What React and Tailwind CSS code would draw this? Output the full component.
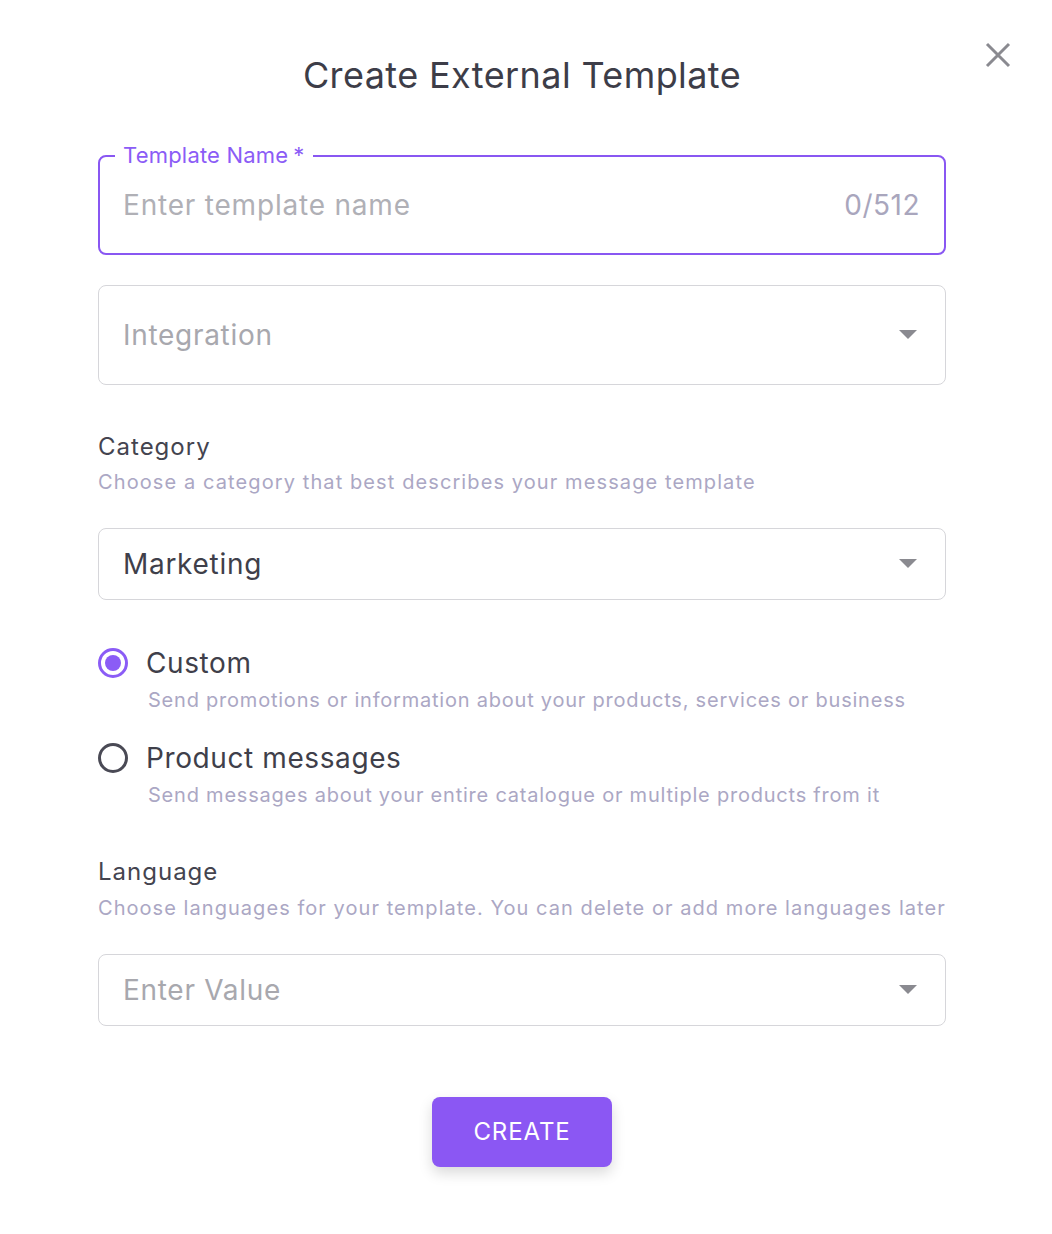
import React, { useState } from 'react';

function Caret() {
  return (
    <svg width="18" height="10" viewBox="0 0 18 10" className="shrink-0">
      <path d="M0 0 L18 0 L9 9 Z" fill="#8a8a90" />
    </svg>
  );
}

function SelectBox({ value, placeholder, tall }) {
  return (
    <div className={`flex items-center justify-between border border-[#d6d6da] rounded-lg pl-[24px] pr-[28px] ${tall ? 'h-[100px]' : 'h-[72px]'}`}>
      <span className={`text-[28px] tracking-[0.7px] ${value ? 'text-[#3f3f4a]' : 'text-[#a8a8ae]'}`}>{value || placeholder}</span>
      <Caret />
    </div>
  );
}

function Radio({ checked, label, hint, onClick }) {
  return (
    <div className="cursor-pointer" onClick={onClick}>
      <div className="flex items-center">
        <span className={`w-[30px] h-[30px] rounded-full border-[3px] flex items-center justify-center ${checked ? 'border-[#8b5cf6]' : 'border-[#4a4a55]'}`}>
          {checked && <span className="w-[16px] h-[16px] rounded-full bg-[#8b5cf6]" />}
        </span>
        <span className="ml-[18px] text-[28px] text-[#3f3f4a] tracking-[0.6px] leading-[38px]">{label}</span>
      </div>
      <p className="ml-[50px] mt-[4px] text-[20px] text-[#aba7c4] tracking-[0.78px] leading-[28px]">{hint}</p>
    </div>
  );
}

export default function App() {
  const [kind, setKind] = useState('custom');

  return (
    <div className="w-[1052px] min-h-[1234px] bg-white relative" style={{ fontFamily: 'Inter, "Noto Sans", sans-serif' }}>
      <button className="absolute left-[985px] top-[42px] w-[26px] h-[26px] text-[#8a8a90]">
        <svg viewBox="0 0 26 26" width="26" height="26">
          <path d="M2 2 L24 24 M24 2 L2 24" stroke="currentColor" strokeWidth="3" />
        </svg>
      </button>

      <div className="ml-[98px] w-[848px] pt-[52px]">
        <h2 className="text-center text-[36px] text-[#3d3d48] leading-[46px] tracking-[0.4px]">Create External Template</h2>

        <div className="relative mt-[57px] h-[100px] border-2 border-[#8957f2] rounded-lg flex items-center justify-between pl-[23px] pr-[24px]">
          <span className="absolute -top-[14px] left-[15px] bg-white px-[8px] text-[22px] leading-[24px] text-[#8b5cf6] tracking-[0.2px]">Template Name<span className="ml-[5px]">*</span></span>
          <input
            className="outline-none text-[28px] text-[#3f3f4a] placeholder-[#b0b0b6] tracking-[0.8px] flex-1 bg-transparent"
            placeholder="Enter template name"
          />
          <span className="text-[28px] text-[#a9a6bd] tracking-[0.5px]">0/512</span>
        </div>

        <div className="mt-[30px]">
          <SelectBox placeholder="Integration" tall />
        </div>

        <div className="mt-[46px]">
          <h3 className="text-[24px] text-[#44444f] leading-[32px] tracking-[1px]">Category</h3>
          <p className="mt-[5px] text-[20px] text-[#aba7c4] tracking-[1.1px] leading-[28px]">Choose a category that best describes your message template</p>
        </div>

        <div className="mt-[32px]">
          <SelectBox value="Marketing" />
        </div>

        <div className="mt-[44px] space-y-[25px]">
          <Radio
            checked={kind === 'custom'}
            onClick={() => setKind('custom')}
            label="Custom"
            hint="Send promotions or information about your products, services or business"
          />
          <Radio
            checked={kind === 'product'}
            onClick={() => setKind('product')}
            label="Product messages"
            hint="Send messages about your entire catalogue or multiple products from it"
          />
        </div>

        <div className="mt-[47px]">
          <h3 className="text-[24px] text-[#44444f] leading-[32px] tracking-[1px]">Language</h3>
          <p className="mt-[6px] text-[20px] text-[#aba7c4] tracking-[1.05px] leading-[28px]">Choose languages for your template. You can delete or add more languages later</p>
        </div>

        <div className="mt-[32px]">
          <SelectBox placeholder="Enter Value" />
        </div>

        <div className="flex justify-center mt-[71px]">
          <button className="w-[180px] h-[70px] rounded-lg bg-[#8b57f3] text-white text-[24px] tracking-[0.9px] shadow-[0_6px_14px_rgba(0,0,0,0.15)]">CREATE</button>
        </div>
      </div>
    </div>
  );
}
